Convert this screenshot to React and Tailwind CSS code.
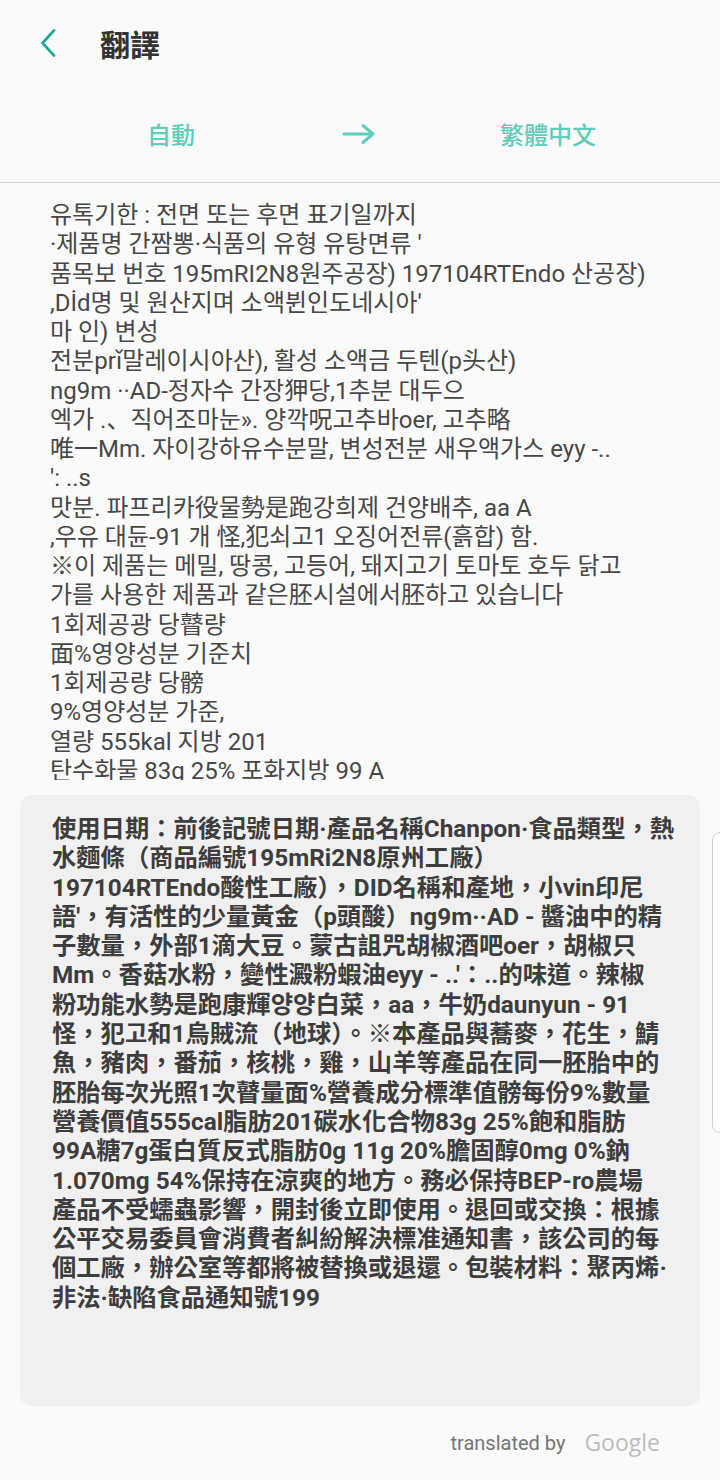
import React from 'react';

const sourceLines = [
  '유톡기한 : 전면 또는 후면 표기일까지',
  '·제품명 간짬뽕·식품의 유형 유탕면류 \'',
  '품목보 번호 195mRI2N8원주공장) 197104RTEndo 산공장)',
  ',Dİd명 및 원산지며 소액뷘인도네시아\'',
  '마 인) 변성',
  '전분prǐ말레이시아산), 활성 소액금 두텐(p头산)',
  'ng9m ··AD-정자수 간장狎당,1추분 대두으',
  '엑가 .、직어조마눈». 양깍呪고추바oer, 고추略',
  '唯一Mm. 자이강하유수분말, 변성전분 새우액가스 eyy -..',
  '\': ..s',
  '맛분. 파프리카役물勢是跑강희제 건양배추, aa A',
  ',우유 대듄-91 개 怪,犯쇠고1 오징어전류(흙합) 함.',
  '※이 제품는 메밀, 땅콩, 고등어, 돼지고기 토마토 호두 닭고',
  '가를 사용한 제품과 같은胚시설에서胚하고 있습니다',
  '1회제공광 당瞽량',
  '面%영양성분 기준치',
  '1회제공량 당髈',
  '9%영양성분 가준,',
  '열량 555kal 지방 201',
  '탄수화물 83g 25% 포화지방 99 A',
];

const translatedLines = [
  '使用日期：前後記號日期·產品名稱Chanpon·食品類型，熱',
  '水麵條（商品編號195mRi2N8原州工廠）',
  '197104RTEndo酸性工廠），DID名稱和產地，小vin印尼',
  '語\'，有活性的少量黃金（p頭酸）ng9m··AD - 醬油中的精',
  '子數量，外部1滴大豆。蒙古詛咒胡椒酒吧oer，胡椒只',
  'Mm。香菇水粉，變性澱粉蝦油eyy - ..\'：..的味道。辣椒',
  '粉功能水勢是跑康輝양양白菜，aa，牛奶daunyun - 91',
  '怪，犯고和1烏賊流（地球）。※本產品與蕎麥，花生，鯖',
  '魚，豬肉，番茄，核桃，雞，山羊等產品在同一胚胎中的',
  '胚胎每次光照1次瞽量面%營養成分標準值髈每份9%數量',
  '營養價值555cal脂肪201碳水化合物83g 25%飽和脂肪',
  '99A糖7g蛋白質反式脂肪0g 11g 20%膽固醇0mg 0%鈉',
  '1.070mg 54%保持在涼爽的地方。務必保持BEP-ro農場',
  '產品不受蠕蟲影響，開封後立即使用。退回或交換：根據',
  '公平交易委員會消費者糾紛解決標准通知書，該公司的每',
  '個工廠，辦公室等都將被替換或退還。包裝材料：聚丙烯·',
  '非法·缺陷食品通知號199',
];

export default function App() {
  return (
    <div className="relative w-[720px] h-[1480px] overflow-hidden bg-[#fafafa] font-['Roboto','Noto_Sans_CJK_TC','Noto_Sans_CJK_KR',sans-serif]">
      {/* header */}
      <div className="flex items-center h-[86px]">
        <button className="ml-[38px] w-[20px] h-[30px] flex items-center justify-center">
          <svg width="16" height="28" viewBox="0 0 16 28" fill="none">
            <polyline points="14,1.5 2.5,14 14,26.5" stroke="#1ba898" strokeWidth="2.6" strokeLinecap="round" strokeLinejoin="round" />
          </svg>
        </button>
        <h1 className="ml-[42px] text-[30px] font-bold text-[#333] font-['Noto_Sans_CJK_TC',sans-serif] leading-none">翻譯</h1>
      </div>

      {/* language selector */}
      <div className="grid grid-cols-[342px_34px_1fr] items-center h-[97px] border-b border-[#cfcfcf] text-[#5fcdb9] font-['Noto_Sans_CJK_TC',sans-serif] text-[24px] font-medium">
        <div className="text-center">自動</div>
        <div className="flex justify-center">
          <svg width="34" height="22" viewBox="0 0 34 22" fill="none">
            <path d="M2 11H31M21 2.5L31 11L21 19.5" stroke="#5fcdb9" strokeWidth="3" strokeLinecap="round" strokeLinejoin="round" />
          </svg>
        </div>
        <div className="text-center">繁體中文</div>
      </div>

      {/* source text */}
      <div className="h-[597px] overflow-hidden pt-[18px] pl-[50px] text-[24px] leading-[29.25px] text-[#474747] font-['Roboto','Noto_Sans_CJK_KR','Noto_Sans_CJK_SC',sans-serif]">
        {sourceLines.map((l, i) => (
          <div key={i} className="whitespace-nowrap">{l}</div>
        ))}
      </div>

      {/* translated text */}
      <div className="mt-[15px] mx-[20px] h-[611px] rounded-[12px] bg-[#f0f0f0] pt-[19px] pl-[32px] text-[24.3px] leading-[29.3px] font-bold text-[#3d3d3d] font-['Roboto','Noto_Sans_CJK_TC',sans-serif]">
        {translatedLines.map((l, i) => (
          <div key={i} className="whitespace-nowrap">{l}</div>
        ))}
      </div>

      {/* footer */}
      <div className="h-[73px] flex items-center justify-end pr-[60px] gap-[19px]">
        <span className="text-[20px] text-[#757575] font-['Roboto',sans-serif]">translated by</span>
        <span className="text-[23px] text-[#bdbdbd] font-['Open_Sans',sans-serif]">Google</span>
      </div>

      {/* edge panel handle */}
      <div className="absolute right-[-8px] top-[832px] w-[16px] h-[301px] rounded-[8px] bg-white border border-[#cfcfcf]" />
    </div>
  );
}
